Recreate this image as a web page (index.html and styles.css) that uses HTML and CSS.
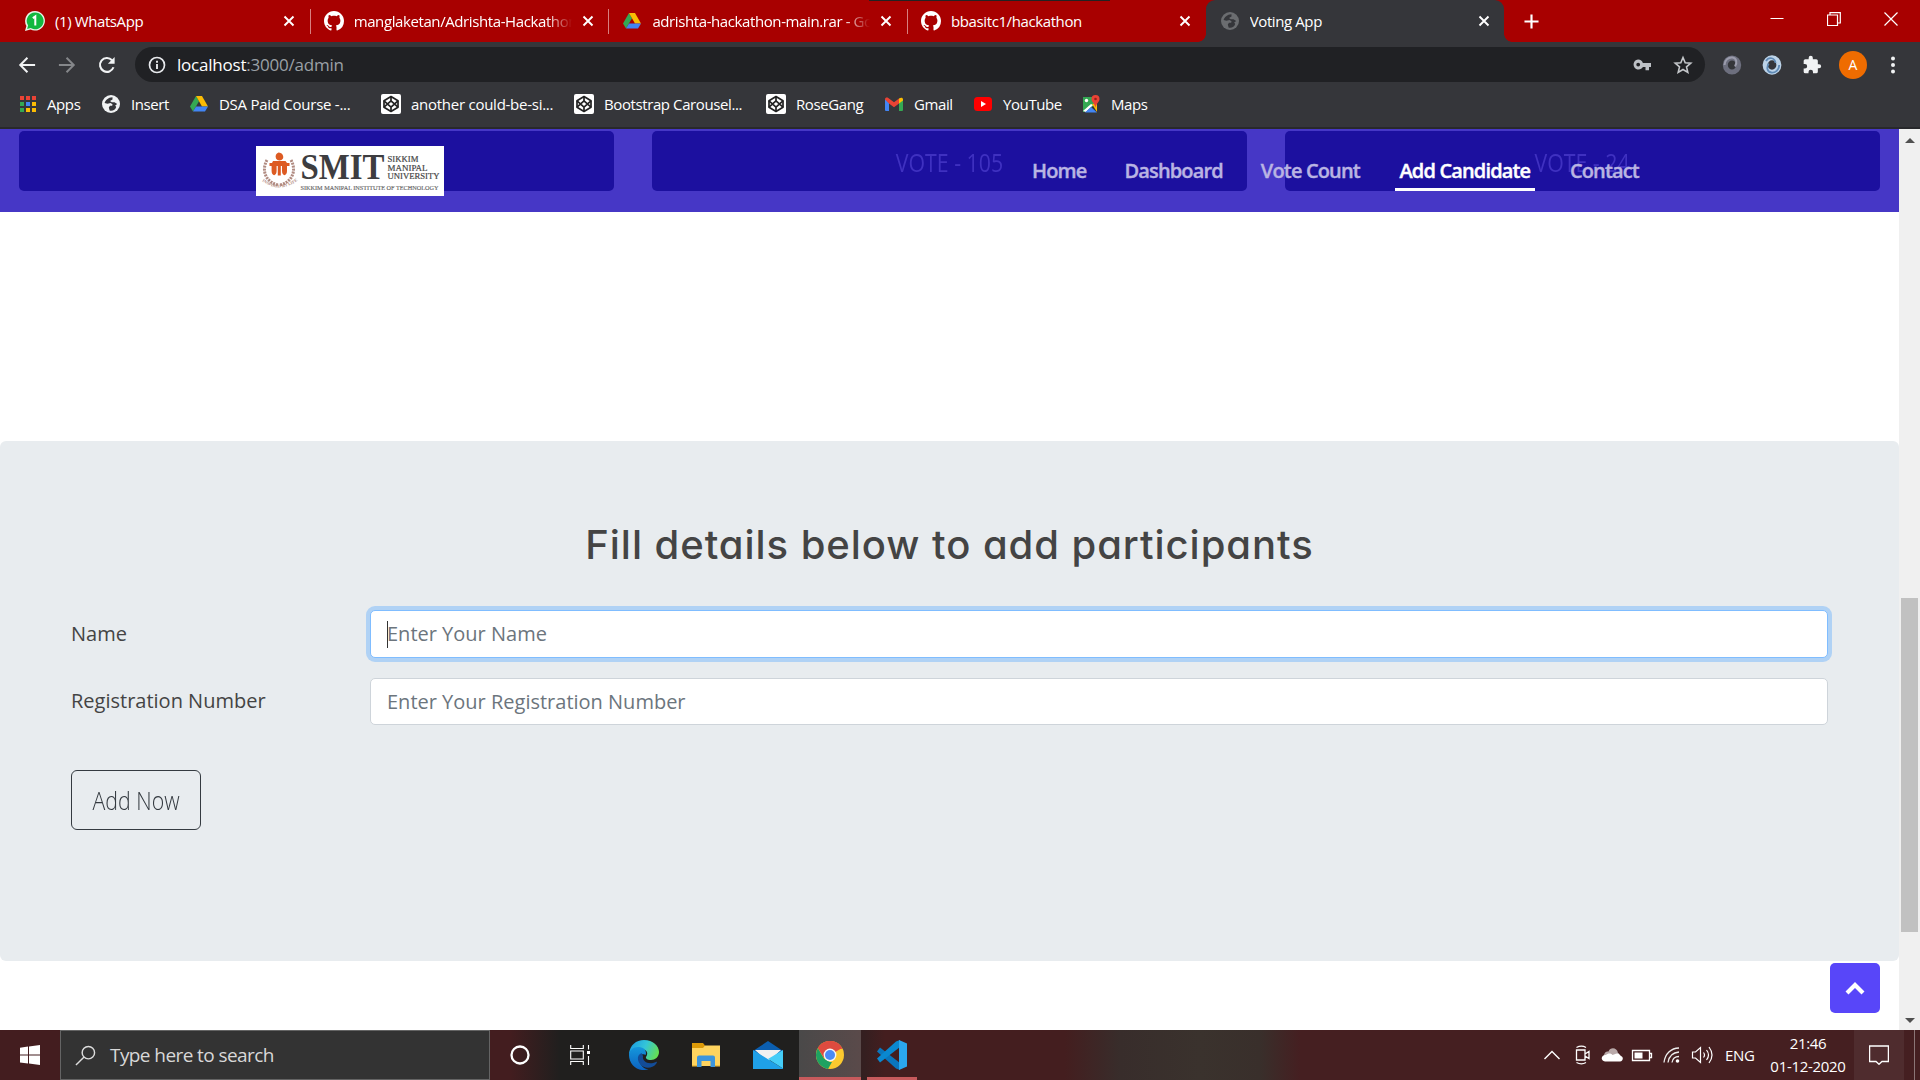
FILE: index.html
```html
<!DOCTYPE html>
<html lang="en">
<head>
<meta charset="utf-8">
<title>Voting App</title>
<link rel="stylesheet" href="styles.css">
</head>
<body>
<svg class="defs" width="0" height="0">
  <symbol id="x" viewBox="0 0 12 12"><path d="M1.5 1.5l9 9M10.5 1.5l-9 9" stroke="#fff" stroke-width="1.9"/></symbol>
  <symbol id="github" viewBox="0 0 16 16"><path fill="#fff" d="M8 0C3.58 0 0 3.58 0 8c0 3.54 2.29 6.53 5.47 7.59.4.07.55-.17.55-.38 0-.19-.01-.82-.01-1.49-2.01.37-2.53-.49-2.69-.94-.09-.23-.48-.94-.82-1.13-.28-.15-.68-.52-.01-.53.63-.01 1.08.58 1.23.82.72 1.21 1.87.87 2.33.66.07-.52.28-.87.51-1.07-1.78-.2-3.64-.89-3.64-3.95 0-.87.31-1.59.82-2.15-.08-.2-.36-1.02.08-2.12 0 0 .67-.21 2.2.82.64-.18 1.32-.27 2-.27s1.36.09 2 .27c1.53-1.04 2.2-.82 2.2-.82.44 1.1.16 1.92.08 2.12.51.56.82 1.27.82 2.15 0 3.07-1.87 3.75-3.65 3.95.29.25.54.73.54 1.48 0 1.07-.01 1.93-.01 2.2 0 .21.15.46.55.38A8.01 8.01 0 0 0 16 8c0-4.42-3.58-8-8-8z"/></symbol>
  <symbol id="drive" viewBox="0 0 18 16"><path fill="#34a853" d="M6 0L0 10.4 3 15.6 9 5.2z"/><path fill="#fbbc04" d="M6 0h6l6 10.4h-6z"/><path fill="#4285f4" d="M3 15.6h12l3-5.2H6z"/></symbol>
  <symbol id="globe" viewBox="0 0 18 18"><circle cx="9" cy="9" r="9"/><path class="land" d="M10.500 2.200C6 2.500 3.500 5 2.600 8l2.900.8 3-.8 2 1.200-.3 1.600H8l-1.200 1.700.8 3c3 .8 6-1 6.600-3.500l-1-1.500 2-1.500-2.700-1.800H9.800L8 6l2.500-1.500z"/></symbol>
  <symbol id="codepen" viewBox="0 0 20 20"><rect width="20" height="20" rx="2" fill="#fff"/><g fill="none" stroke="#222" stroke-width="1.700" stroke-linejoin="round"><path d="M10 2.500l7 4.300v6.400L10 17.500l-7-4.300V6.800z"/><path d="M10 2.500v4.300M10 13.200v4.300M3 6.800l7 6.400 7-6.400M3 13.200l7-6.400 7 6.400"/></g></symbol>
</svg>

<header class="tabs">
  <div class="tab">
    <svg class="fav" viewBox="0 0 20 20"><path fill="#e8f5e9" d="M10 0a10 9.800 0 1 1-4.500 18.600L0 20l1.400-5A10 10 0 0 1 10 0z"/><path fill="#12b83f" d="M10 1.500a8.400 8.400 0 1 1-4.300 15.500l-3.600 1 1-3.500A8.400 8.400 0 0 1 10 1.500z"/><path d="M7.800 7.200L10.300 5.500V14.500" fill="none" stroke="#fff" stroke-width="2"/></svg>
    <span class="title">(1) WhatsApp</span><svg class="close"><use href="#x"/></svg>
  </div>
  <div class="tab divided"><svg class="fav"><use href="#github"/></svg><span class="title fade">manglaketan/Adrishta-Hackathon</span><svg class="close"><use href="#x"/></svg></div>
  <div class="tab divided"><svg class="fav sm"><use href="#drive"/></svg><span class="title fade">adrishta-hackathon-main.rar - Google</span><svg class="close"><use href="#x"/></svg></div>
  <div class="tab divided"><svg class="fav"><use href="#github"/></svg><span class="title">bbasitc1/hackathon</span><svg class="close"><use href="#x"/></svg></div>
  <div class="tab active"><svg class="fav sm dim"><use href="#globe"/></svg><span class="title">Voting App</span><svg class="close"><use href="#x"/></svg></div>
  <svg class="plus" viewBox="0 0 16 16"><path d="M8 .5v15M.5 8h15" stroke="#fff" stroke-width="2.300"/></svg>
  <div class="winctl">
    <svg viewBox="0 0 14 14"><path d="M.5 6.500h13" stroke="#fff"/></svg>
    <svg viewBox="0 0 14 14"><path d="M.5 3h10v10.500H.5zM3 3V.700h10.300V11H10.500" fill="none" stroke="#fff" stroke-width="1.200"/></svg>
    <svg viewBox="0 0 14 14"><path d="M.5.5l13 13M13.500.5l-13 13" stroke="#fff" stroke-width="1.200"/></svg>
  </div>
  <i class="edge-line"></i>
</header>

<div class="toolbar">
  <div class="navbtns">
    <svg viewBox="0 0 20 20"><path d="M19 10H2.500M10.500 2L2.500 10l8 8" fill="none" stroke="#f1f3f4" stroke-width="2.200"/></svg>
    <svg viewBox="0 0 20 20"><path d="M1 10h16.500M9.500 2l8 8-8 8" fill="none" stroke="#85878a" stroke-width="2.200"/></svg>
    <svg viewBox="0 0 20 20"><path d="M17.200 12.500A7.700 7.700 0 1 1 15.600 4.700" fill="none" stroke="#f1f3f4" stroke-width="2.300"/><path d="M18.500 1v7.500H11z" fill="#f1f3f4"/></svg>
  </div>
  <div class="omnibox">
    <svg class="info" viewBox="0 0 18 18"><circle cx="9" cy="9" r="7.500" fill="none" stroke="#e8eaed" stroke-width="1.700"/><path d="M9 8v5M9 4.800v1.900" stroke="#e8eaed" stroke-width="1.900"/></svg>
    <span class="url"><b>localhost</b>:3000/admin</span>
    <svg class="key" viewBox="0 0 18 12"><path fill="#bdc1c6" fill-rule="evenodd" d="M5.200.5a5 5 0 0 1 4.700 3.500H18v4h-2v3.200h-3.500V8H9.900A5 5 0 1 1 5.200.5zm0 3.200a1.900 1.900 0 1 0 0 3.800 1.900 1.900 0 0 0 0-3.800z"/></svg>
    <svg class="star" viewBox="0 0 20 20"><path d="M10 2.500l2.200 5.200 5.600.5-4.300 3.700 1.300 5.500L10 14.500l-4.800 2.900 1.300-5.500-4.300-3.700 5.600-.5z" fill="none" stroke="#c4c7ca" stroke-width="1.600"/></svg>
  </div>
  <div class="exts">
    <svg viewBox="0 0 20 20"><ellipse cx="10" cy="10" rx="6.700" ry="7" fill="none" stroke="#6d6f7e" stroke-width="5"/><path d="M2.500 10c0-5 4-8 8-7.500 4 .5 5 5 2.500 9" fill="none" stroke="#9b9cac" stroke-width="2"/></svg>
    <svg viewBox="0 0 20 20"><ellipse cx="10" cy="10" rx="6.900" ry="7.200" fill="none" stroke="#bcd3e8" stroke-width="5"/><path d="M17.200 10c0 5-4 8-8 7.500-4-.5-5-5-2.500-9M4 6c3-5 9-3 9.500 2" fill="none" stroke="#5f8ab5" stroke-width="1.800"/></svg>
    <svg viewBox="0 0 24 24"><path fill="#f1f3f4" d="M20.500 11H19V7a2 2 0 0 0-2-2h-4V3.500a2.500 2.500 0 0 0-5 0V5H4a2 2 0 0 0-2 2v3.800h1.500a2.700 2.700 0 0 1 0 5.400H2V20a2 2 0 0 0 2 2h3.800v-1.500a2.700 2.700 0 0 1 5.400 0V22H17a2 2 0 0 0 2-2v-4h1.500a2.500 2.500 0 0 0 0-5z"/></svg>
    <span class="avatar">A</span>
    <svg viewBox="0 0 20 20" fill="#f1f3f4"><circle cx="8" cy="3.500" r="2"/><circle cx="8" cy="10" r="2"/><circle cx="8" cy="16.500" r="2"/></svg>
  </div>
</div>

<div class="bookmarks">
  <span><svg viewBox="0 0 16 16" class="i16"><path fill="#ea4335" d="M0 0h4v4H0zM6 0h4v4H6zM12 0h4v4h-4z"/><path fill="#34a853" d="M0 6h4v4H0zM0 12h4v4H0z"/><path fill="#4285f4" d="M6 6h4v4H6z"/><path fill="#fbbc04" d="M12 6h4v4h-4zM6 12h4v4H6zM12 12h4v4h-4z"/></svg>Apps</span>
  <span><svg class="i18 light"><use href="#globe"/></svg>Insert</span>
  <span><svg class="i18"><use href="#drive"/></svg>DSA Paid Course -...</span>
  <span><svg class="i20"><use href="#codepen"/></svg>another could-be-si...</span>
  <span><svg class="i20"><use href="#codepen"/></svg>Bootstrap Carousel...</span>
  <span><svg class="i20"><use href="#codepen"/></svg>RoseGang</span>
  <span><svg class="i18" viewBox="0 0 18 14"><path fill="#4285f4" d="M0 2v11a1 1 0 0 0 1 1h3V5z"/><path fill="#34a853" d="M18 2v11a1 1 0 0 1-1 1h-3V5z"/><path fill="#ea4335" d="M0 2.500C0 .5 2 0 3.300 1L9 5.200 14 1.500v5L9 10.300 4 6.500z"/><path fill="#fbbc04" d="M14 1.500c2-1.500 4-1 4 1L18 3.600l-4 3z"/></svg>Gmail</span>
  <span><svg class="i18" viewBox="0 0 18 14"><rect width="18" height="14" rx="3.500" fill="#f00"/><path fill="#fff" d="M7 4l5 3-5 3z"/></svg>YouTube</span>
  <span><svg class="i18" viewBox="0 0 18 18"><path fill="#34a853" d="M1 2h12v8L2 17H1z"/><path fill="#fff" d="M1 16L9 9l2 1-7 7z"/><path fill="#4285f4" d="M3 17.500L9 12l6 5.500z"/><path fill="#fbbc04" d="M10 9l5-1v9z"/><circle cx="4.500" cy="5.500" r="1.700" fill="#fff"/><path fill="#ea4335" d="M13.500 0a4 4 0 0 1 4 4c0 3-3 4-4 8.500-1-4.500-4-5.500-4-8.500a4 4 0 0 1 4-4z"/><circle cx="13.500" cy="4" r="1.300" fill="#971d1a"/></svg>Maps</span>
</div>

<div class="viewport">
  <main class="page">
    <section class="hero">
      <div class="cards">
        <div class="card"></div>
        <div class="card"><span>VOTE - 105</span></div>
        <div class="card"><span>VOTE - 24</span></div>
      </div>
      <nav class="nav">
        <svg class="logo" viewBox="0 0 188 50">
          <rect width="188" height="50" fill="#fff"/>
          <g fill="none" stroke="#b08a80" stroke-width="3" stroke-dasharray="2 1"><path d="M11 14C5 25 10 36 22 39M35 14c6 11 1 22-11 25"/></g>
          <path id="motto" d="M6 35q17 13 35 0" fill="none"/>
          <text class="motto"><textPath href="#motto">INSPIRED BY LIFE</textPath></text>
          <path fill="#dd5b23" d="M20 12.500c-1-3 0-5 2.500-6 4 0 5.500 4 4.500 6-1.500 2.500-5.500 2.500-7 0zM17 15h12.500l1.500 2h2.500v3h-2.500v5c0 5.500-5 5.500-5 0v-5h-1.200v9.500h-3V20h-1.200v5c0 5.500-5 5.500-5 0v-5H13.500v-3H16z"/>
          <text x="44.500" y="33" textLength="84" lengthAdjust="spacingAndGlyphs" class="smit">SMIT</text>
          <g class="uni"><text x="131.500" y="15.500" textLength="31" lengthAdjust="spacingAndGlyphs">SIKKIM</text><text x="131.500" y="24.500" textLength="40" lengthAdjust="spacingAndGlyphs">MANIPAL</text><text x="131.500" y="33" textLength="52" lengthAdjust="spacingAndGlyphs">UNIVERSITY</text></g>
          <text x="44.500" y="43.500" textLength="138" lengthAdjust="spacingAndGlyphs" class="inst">SIKKIM MANIPAL INSTITUTE OF TECHNOLOGY</text>
        </svg>
        <ul class="links">
          <li>Home</li><li>Dashboard</li><li>Vote Count</li><li class="on">Add Candidate</li><li>Contact</li>
        </ul>
      </nav>
    </section>
    <section class="panel">
      <h1>Fill details below to add participants</h1>
      <form class="form">
        <label>Name</label>
        <div class="field focus"><i class="caret"></i>Enter Your Name</div>
        <label class="second">Registration Number</label>
        <div class="field">Enter Your Registration Number</div>
      </form>
      <div class="btn"><span>Add Now</span></div>
    </section>
    <div class="totop"><svg viewBox="0 0 20 13"><path d="M2 11l8-8 8 8" fill="none" stroke="#fff" stroke-width="4.200"/></svg></div>
  </main>
  <aside class="scrollbar"><i class="up"></i><i class="thumb"></i><i class="down"></i></aside>
</div>

<footer class="taskbar">
  <div class="start"><svg viewBox="0 0 20 20"><path fill="#fff" d="M0 2.800l8-1.200v8H0zM9 1.400L20 0v9.600H9zM0 10.600h8v8l-8-1.200zM9 10.600h11V20L9 18.600z"/></svg></div>
  <div class="search"><svg viewBox="0 0 22 22"><circle cx="14" cy="8" r="6.500" fill="none" stroke="#ddd" stroke-width="1.500"/><path d="M9.500 12.500L1 21" stroke="#ddd" stroke-width="1.500"/></svg><span>Type here to search</span></div>
  <div class="app"><svg class="s20" viewBox="0 0 20 20"><circle cx="10" cy="10" r="8.500" fill="none" stroke="#fff" stroke-width="2.300"/></svg></div>
  <div class="app"><svg class="s20" viewBox="0 0 20 20"><path d="M.7 0v3.500h12.600V0M.7 20v-3.500h12.600V20M.7 6h12.600v8H.7zM18.500 0v4.500M18.500 11v9" fill="none" stroke="#fff" stroke-width="1.100"/><path fill="#fff" d="M17 6h3v3h-3z"/></svg></div>
  <div class="app"><svg class="s30" viewBox="0 0 30 30"><defs><linearGradient id="e1" x1="0" x2="1" y1=".3" y2=".6"><stop offset="0" stop-color="#1b9de2"/><stop offset=".5" stop-color="#34c5d8"/><stop offset="1" stop-color="#66e04f"/></linearGradient><linearGradient id="e2" x1="0" x2="0" y1="0" y2="1"><stop offset="0" stop-color="#1597dc"/><stop offset="1" stop-color="#0c62c0"/></linearGradient></defs><path fill="url(#e1)" d="M0 14C1 5 7 0 15 0c9 0 15 6 15 12 0 5-4 8-8 8-4 0-5.500-1.500-5-3 3-4 .5-8-5-8-5 0-9 2-12 5z"/><path fill="url(#e2)" d="M0 15c0-5 5-8.500 10-8 6 .5 8 5 6.500 8-3-2-7 1-6 6 1 5 5 8.500 9 8-10 4-19.500-4-19.500-14z"/><path fill="#134c97" d="M12.500 13C8 15 8 20 11 24c4 5 12 5 16 0 1.500-2 1-2.500 0-2-8 3.500-14-1-13-6z"/></svg></div>
  <div class="app"><svg class="s28" viewBox="0 0 28 24"><path fill="#dd9a08" d="M0 0h11l2 2.500V6H0z"/><path fill="#ffd45f" d="M0 5h11l2-2.500h15V23H0z"/><path fill="#3d95dc" d="M5 24v-9.500q0-2 2-2h14q2 0 2 2V24h-4.500v-6h-9v6z"/><path fill="#eebc3c" d="M0 22h5v1.500H0zM23 22h5v1.500h-5z"/></svg></div>
  <div class="app"><svg class="s30" viewBox="0 0 30 28"><path fill="#0b5eb0" d="M0 10L15 0l15 10v4H0z"/><path fill="#f1f1f1" d="M2 9h26L15 21z"/><path fill="#1fa0e8" d="M0 9l30 18.500V28H0z"/><path fill="#45cdf8" d="M30 9v18.500L15 18z"/></svg></div>
  <div class="app current"><svg class="s28" viewBox="0 0 28 28"><circle cx="14" cy="14" r="14" fill="#fbc92f"/><path fill="#de4b3f" d="M14 14L1.900 7A14 14 0 0 1 26.100 7z"/><path fill="#1ea261" d="M1.900 7L8 17.500l6 3.500 2 0-4 6.900A14 14 0 0 1 1.900 7z"/><path fill="#de4b3f" d="M14 7.700h12.500A14 14 0 0 0 1.900 7l6 10z"/><circle cx="14" cy="14" r="6.400" fill="#f5f5f5"/><circle cx="14" cy="14" r="5" fill="#4a8af4"/></svg></div>
  <div class="app running"><svg class="s30" viewBox="0 0 30 30"><path fill="#0a76bd" d="M3 7.500L23 23v7l-4-1.500L0 11.500z"/><path fill="#0a88d0" d="M3 22.500L23 7V0l-4 1.500L0 18.500z"/><path fill="#2ba7ee" d="M22 0l8 3.500v23L22 30z"/></svg></div>
  <div class="tray">
    <svg viewBox="0 0 22 22"><path d="M3.500 15L11 7.500l7.500 7.500" fill="none" stroke="#fff" stroke-width="1.400"/></svg>
    <svg viewBox="0 0 22 22"><path d="M5.500 6h8.500v10H5.500zM14 10l4-2.500v7L14 12M5.500 3.500q5-2.600 9.500 0M5.500 18.500q5 2.600 9.500 0" fill="none" stroke="#fff" stroke-width="1.300"/></svg>
    <svg viewBox="0 0 22 22"><path fill="#b9a9a9" d="M3 12C3 8 6 7 7.500 7.500 9 3 16 3 17 9l-5 3z"/><path fill="#fff" d="M4 17.500c-5-.5-4-7 1-6.500 2-2 5-2 6.500 0l4-1.500c3-1 3 2 4.500 2.500 3 1 2 5.500-1 5.500z"/></svg>
    <svg viewBox="0 0 22 22"><path d="M1.500 6.500h17v10h-17zM18.500 9.500H20.500v4h-2" fill="none" stroke="#fff" stroke-width="1.300"/><path fill="#fff" d="M3.500 8.500h8v6h-8z"/></svg>
    <svg viewBox="0 0 22 22"><g fill="none" stroke="#eee" stroke-width="1.300"><path d="M3 18.500C4 10 10 4 18 4M7 18.500C8 12 12 8.500 18 8M11 18.500c.5-3.500 3-6 7-6"/></g><circle cx="16.500" cy="17" r="1.800" fill="#fff"/></svg>
    <svg viewBox="0 0 22 22"><path d="M1.500 8h3l5-4.500v15l-5-4.500h-3zM12.500 8.500q2 2.500 0 5M15.500 6q4 5 0 10M18 3q6 8 0 16" fill="none" stroke="#fff" stroke-width="1.200"/></svg>
  </div>
  <span class="lang">ENG</span>
  <div class="clock"><span>21:46</span><span>01-12-2020</span></div>
  <div class="notif"><svg viewBox="0 0 20 20"><path d="M.6 1h18.800v15.500H13L10 19.300 7 16.500H.6z" fill="none" stroke="#fff" stroke-width="1.300"/></svg></div>
  <i class="desk"></i>
</footer>
</body>
</html>
```
FILE: styles.css
```css
* { box-sizing: border-box; }
body {
  margin: 0; width: 1920px; height: 1080px; overflow: hidden;
  display: flex; flex-direction: column;
  font-family: "Open Sans", "Noto Sans", sans-serif; background: #fff;
}
svg { display: block; flex: none; }
.defs { position: absolute; }

/* tab strip */
.tabs { position: relative; height: 42px; background: #a80000; display: flex; align-items: center; padding-left: 11px; flex: none; }
.tab { width: 298.7px; height: 42px; display: flex; align-items: center; padding-left: 14px; color: #fff; font-size: 15px; letter-spacing: -.4px; position: relative; flex: none; }
.divided::before { content: ""; position: absolute; left: 0; top: 9px; width: 1px; height: 25px; background: #d88080; }
.fav { width: 20px; height: 20px; margin-right: 10px; }
.fav.sm { width: 18px; height: 18px; margin: 0 11px 0 1px; }
.title { width: 218px; margin-right: 10px; overflow: hidden; white-space: nowrap; line-height: 24px; padding-bottom: 1px; flex: none; }
.fade { -webkit-mask-image: linear-gradient(90deg, #000 88%, transparent); mask-image: linear-gradient(90deg, #000 88%, transparent); }
.close { width: 12px; height: 12px; }
.tab.active { background: #35363a; border-radius: 9px 9px 0 0; }
.active::before, .active::after { content: ""; position: absolute; bottom: 0; width: 8px; height: 8px; }
.active::before { left: -8px; background: radial-gradient(circle at 0 0, transparent 7.5px, #35363a 8px); }
.active::after { right: -8px; background: radial-gradient(circle at 100% 0, transparent 7.5px, #35363a 8px); }
.dim { fill: #6b6d70; }
.light { fill: #f1f3f4; }
.land { fill: #35363a; }
.plus { width: 15px; height: 15px; margin-left: 20px; }
.winctl { display: flex; gap: 43px; margin-left: auto; padding: 0 22px 5px 0; }
.winctl svg { width: 14px; height: 14px; }
.edge-line { position: absolute; left: 869px; top: 0; width: 241px; height: 1px; background: #222; }

/* address row */
.toolbar { height: 45px; background: #35363a; display: flex; align-items: center; flex: none; }
.navbtns { display: flex; gap: 22px; width: 135px; padding-left: 18px; }
.navbtns svg { width: 18px; height: 18px; }
.omnibox { width: 1570px; height: 35px; border-radius: 18px; background: #202124; display: flex; align-items: center; padding-left: 13px; flex: none; }
.info { width: 18px; height: 18px; }
.url { margin-left: 11px; font-size: 17px; color: #9aa0a6; letter-spacing: -.22px; line-height: 30px; width: 1456px; }
.url b { font-weight: 400; color: #fff; }
.key { width: 18px; height: 12px; }
.star { width: 20px; height: 20px; margin-left: 22px; }
.exts { display: flex; align-items: center; gap: 20px; padding-left: 17px; }
.exts svg { width: 20px; height: 20px; }
.avatar { width: 28px; height: 28px; border-radius: 50%; background: #ef6c00; color: #fff; font-size: 14px; line-height: 28px; text-align: center; margin: 0 -2px 0 -3px; }

/* bookmarks */
.bookmarks { height: 42px; background: #35363a; border-bottom: 2px solid #28292c; padding: 0 0 6px 20px; display: grid; grid-template-columns: 82px 88px 191px 193px 192px 119px 89px 108px 100px; align-items: center; color: #fff; font-size: 15px; letter-spacing: -.4px; flex: none; }
.bookmarks span { display: flex; align-items: center; white-space: nowrap; }
.bookmarks span:nth-child(3), .bookmarks span:nth-child(4) { letter-spacing: -.26px; }
.i16 { width: 16px; height: 16px; margin-right: 11px; }
.i18 { width: 18px; height: 18px; margin-right: 11px; }
.i20 { width: 20px; height: 20px; margin-right: 10px; }

/* page */
.viewport { height: 901px; display: flex; flex: none; }
.page { width: 1899px; position: relative; background: #fff; }
.hero { height: 83px; background: #4637c6; position: relative; padding: 2px 19px 0; }
.cards { display: grid; grid-template-columns: repeat(3, 595px); column-gap: 38px; }
.card { height: 60px; border-radius: 5px; background: #1c109f; text-align: center; color: #3f31c0; font-size: 26px; font-weight: 400; line-height: 62px; }
.card span, .btn span { display: inline-block; transform: scaleX(.82); white-space: nowrap; }
.nav { position: absolute; inset: 0; display: flex; padding-left: 256px; }
.logo { width: 188px; height: 50px; margin-top: 17px; font-family: "Liberation Serif", serif; }
.smit { font-size: 35px; font-weight: 700; fill: #3d3d40; }
.uni { font-size: 9px; fill: #444; stroke: #444; stroke-width: .2px; }
.inst { font-size: 6.5px; fill: #666; stroke: #666; stroke-width: .15px; }
.motto { font-size: 4.3px; font-weight: 700; fill: #b08a80; }
.links { list-style: none; margin: 24px 0 0 588px; padding: 0; display: flex; gap: 38px; font-size: 20px; font-weight: 600; color: #b9b4e3; letter-spacing: -.85px; -webkit-text-stroke: .4px; line-height: 36px; white-space: nowrap; }
.links li { height: 38px; }
.links .on { color: #fff; border-bottom: 3px solid #fff; width: 140px; text-align: center; margin: 0 -3px; }

.panel { margin-top: 229px; height: 520px; background: #e8ecef; border-radius: 6px; padding: 78px 71px 0; }
.panel h1 { margin: 0; text-align: center; font: 500 40px/52px Inter, "Open Sans", sans-serif; letter-spacing: .95px; font-feature-settings: "cv11"; color: #444; white-space: nowrap; }
.form { display: grid; grid-template-columns: 299px 1458px; grid-template-rows: 50px 47px; row-gap: 19px; margin-top: 38px; font-size: 20px; color: #444; align-items: start; }
.form label { line-height: 50px; }
.form .second { line-height: 46px; }
.field { height: 47px; line-height: 45px; border: 1px solid #ced4da; border-radius: 5px; background: #fff; color: #6c757d; padding-left: 16px; display: flex; }
.field.focus { height: 48px; margin-top: 1px; line-height: 46px; border-color: #80bdff; box-shadow: 0 0 0 4px #b0d2f5; }
.caret { width: 1px; height: 27px; margin: 10px -1px 0 0; background: #333; }
.btn { width: 130px; height: 60px; margin: 45px 0 0; border: 1px solid #343a40; border-radius: 6px; color: #343a40; font-size: 26px; font-weight: 350; line-height: 58px; display: flex; justify-content: center; }
.totop { position: absolute; right: 19px; bottom: 17px; width: 50px; height: 50px; border-radius: 5px; background: #5846f9; display: flex; align-items: center; justify-content: center; }
.totop svg { width: 20px; height: 13px; }
.scrollbar { width: 21px; background: #f0f0f0; display: flex; flex-direction: column; align-items: center; }
.up, .down { width: 0; height: 0; border: 5px solid transparent; }
.up { border-bottom-color: #505050; margin-top: 4px; }
.thumb { width: 17px; height: 334px; background: #c1c1c1; margin-top: 455px; }
.down { border-top-color: #505050; margin-top: 86px; }

/* taskbar */
.taskbar { height: 50px; flex: none; display: flex; align-items: center; color: #fff;
  background: linear-gradient(90deg, #431d1f 0 510px, #201f1e 560px 800px, #351f20 865px, #441e1f 885px 1065px, #382d2b 1120px, #3a322d 1200px, #392f2b 1260px, #451f21 1300px 100%); }
.start { width: 60px; display: flex; justify-content: center; }
.start svg { width: 20px; height: 20px; }
.search { width: 430px; height: 50px; background: #333; border: 1px solid #646464; display: flex; align-items: center; padding-left: 14px; font-size: 19px; color: #d8d8d8; letter-spacing: -.58px; }
.search svg { width: 21px; height: 21px; margin-right: 14px; }
.app { width: 62px; height: 50px; display: flex; align-items: center; justify-content: center; flex: none; position: relative; }
.s20 { width: 20px; height: 20px; }
.s28 { width: 28px; height: 28px; }
.s30 { width: 30px; height: 30px; }
.search + .app { width: 60px; }
.search + .app + .app { width: 60px; margin-right: 3px; }
.current { background: linear-gradient(90deg, #4a4949, #5a4a4a); border-bottom: 3px solid #c75a5c; }
.current svg { margin-top: 3px; }
.running::after { content: ""; position: absolute; left: 6px; right: 6px; bottom: 0; height: 3px; background: #c75a5c; }
.tray { display: flex; gap: 8px; margin-left: 618px; }
.tray svg { width: 22px; height: 22px; }
.lang { margin-left: 12px; width: 41px; font-size: 15px; letter-spacing: -.3px; }
.clock { width: 84px; display: flex; flex-direction: column; align-items: center; font-size: 15px; line-height: 23px; letter-spacing: -.3px; white-space: nowrap; }
.notif { margin-left: auto; width: 50px; height: 50px; background: #4f2c2e; display: flex; align-items: center; justify-content: center; }
.notif svg { width: 20px; height: 20px; }
.desk { width: 1px; height: 50px; background: #8b7576; margin: 0 5px 0 10px; }
```
